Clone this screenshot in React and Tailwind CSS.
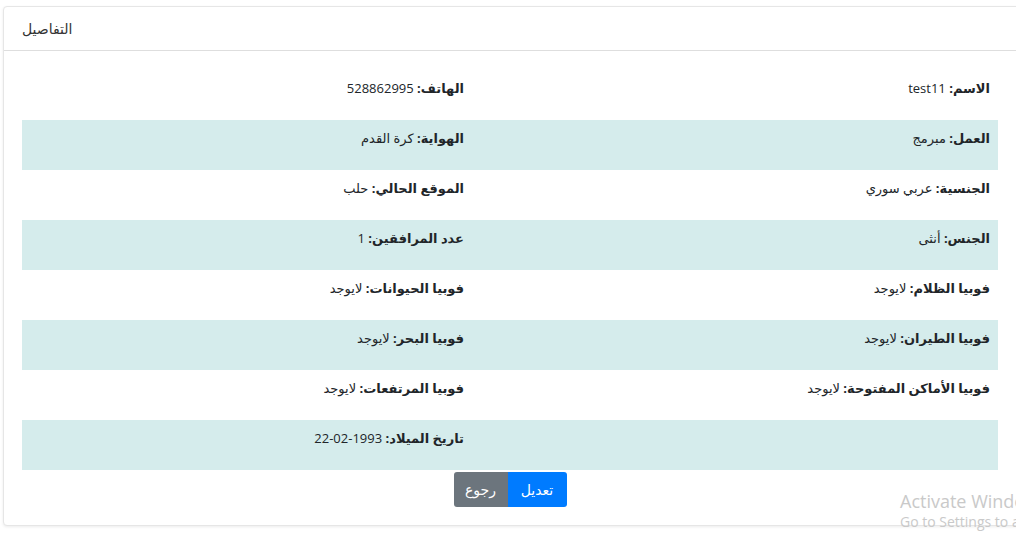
import React from 'react';

// بيانات الصفوف: كل صف فيه عمودان (يمين ثم يسار)
const rows = [
  [['الاسم', 'test11'], ['الهاتف', '528862995']],
  [['العمل', 'مبرمج'], ['الهواية', 'كرة القدم']],
  [['الجنسية', 'عربي سوري'], ['الموقع الحالي', 'حلب']],
  [['الجنس', 'أنثى'], ['عدد المرافقين', '1']],
  [['فوبيا الظلام', 'لايوجد'], ['فوبيا الحيوانات', 'لايوجد']],
  [['فوبيا الطيران', 'لايوجد'], ['فوبيا البحر', 'لايوجد']],
  [['فوبيا الأماكن المفتوحة', 'لايوجد'], ['فوبيا المرتفعات', 'لايوجد']],
  [null, ['تاريخ الميلاد', '1993-02-22']],
];

const Cell = ({ item, className }) => (
  <div className={`px-2 pt-2 leading-5 ${className}`}>
    {item && (
      <>
        <span className="font-bold">{item[0]}:</span> {item[1]}
      </>
    )}
  </div>
);

export default function App() {
  return (
    <div
      className="relative w-[1016px] h-[533px] overflow-hidden bg-white pt-[6px] pl-[3px] text-[13px] text-[#212529]"
      style={{ fontFamily: '"Open Sans", "Noto Sans", "DejaVu Sans", sans-serif' }}
    >
      <div className="w-[1030px] rounded border border-[#e6e6e6] shadow-[0_1px_3px_rgba(0,0,0,0.08)] bg-white">
        {/* رأس البطاقة */}
        <div className="h-[44px] flex items-center px-[18px] border-b border-[#dedede] text-[14px] text-[#333]">
          التفاصيل
        </div>

        {/* جسم البطاقة */}
        <div className="pt-[19px] pb-[18px] pl-[18px] pr-[31px]">
          <div dir="rtl" className="w-[976px]">
            {rows.map((row, i) => (
              <div
                key={i}
                className={`flex h-[50px] ${i % 2 === 1 ? 'bg-[#d5ecec]' : 'bg-white'}`}
              >
                <Cell item={row[0]} className="w-[526px]" />
                <Cell item={row[1]} className="w-[450px]" />
              </div>
            ))}
          </div>

          {/* الأزرار */}
          <div className="flex justify-center w-[976px] pt-[2px]">
            <div dir="rtl" className="flex">
              <button className="h-[35px] w-[59px] bg-[#007bff] text-white text-[14px] rounded-r-[3px]">
                تعديل
              </button>
              <button className="h-[35px] w-[54px] bg-[#6c757d] text-white text-[14px] rounded-l-[3px]">
                رجوع
              </button>
            </div>
          </div>
        </div>
      </div>

      {/* علامة تفعيل ويندوز */}
      <div className="absolute left-[900px] top-[489px] whitespace-nowrap text-[#c9c9c9] pointer-events-none">
        <div className="text-[18px] leading-6">Activate Windows</div>
        <div className="text-[14px] leading-5 -mt-[1px]">Go to Settings to activate Windows.</div>
      </div>
    </div>
  );
}
